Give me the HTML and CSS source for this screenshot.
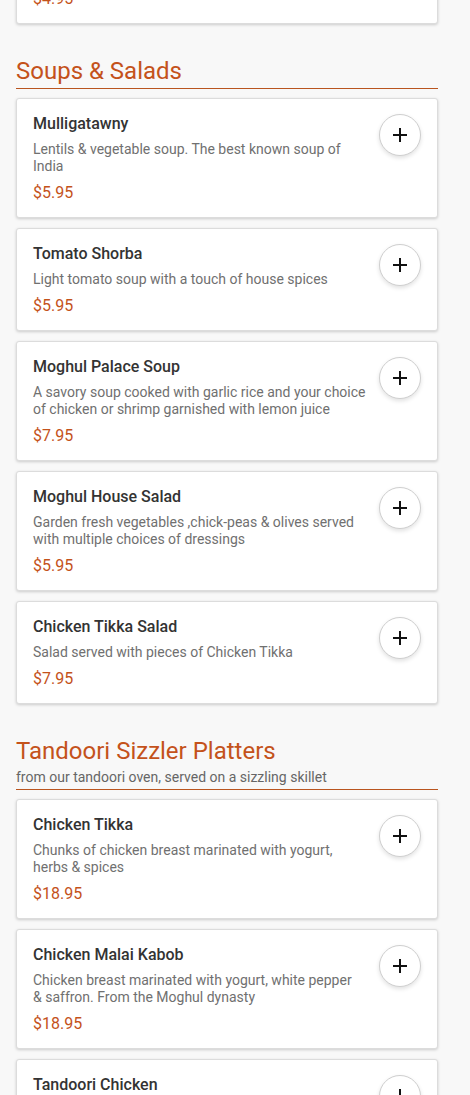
FILE: index.html
```html
<!DOCTYPE html>
<html>
<head>
	<meta charset="utf-8">
	<meta name="viewport" content="width=device-width, initial-scale=1">
	<title>Moghul Palace Menu</title>
	<link rel="stylesheet" href="styles.css">
</head>
<body>
<div class="menu">

<section class="category">
	<div class="item">
		<div class="item-info">
			<h4 class="item-name">Vegetable Pakora</h4>
			<p class="item-desc">Fresh vegetables fried in chick-pea batter</p>
			<span class="item-price">$4.95</span>
		</div>
		<button class="add-btn" aria-label="Add">
			<svg width="16" height="16" viewBox="0 0 16 16"><path d="M8 1v14M1 8h14" stroke="#111" stroke-width="2"/></svg>
		</button>
	</div>
</section>

<section class="category">
	<div class="category-head">
		<h2>Soups &amp; Salads</h2>
	</div>

	<div class="item">
		<div class="item-info">
			<h4 class="item-name">Mulligatawny</h4>
			<p class="item-desc">Lentils &amp; vegetable soup. The best known soup of India</p>
			<span class="item-price">$5.95</span>
		</div>
		<button class="add-btn" aria-label="Add">
			<svg width="16" height="16" viewBox="0 0 16 16"><path d="M8 1v14M1 8h14" stroke="#111" stroke-width="2"/></svg>
		</button>
	</div>

	<div class="item">
		<div class="item-info">
			<h4 class="item-name">Tomato Shorba</h4>
			<p class="item-desc">Light tomato soup with a touch of house spices</p>
			<span class="item-price">$5.95</span>
		</div>
		<button class="add-btn" aria-label="Add">
			<svg width="16" height="16" viewBox="0 0 16 16"><path d="M8 1v14M1 8h14" stroke="#111" stroke-width="2"/></svg>
		</button>
	</div>

	<div class="item">
		<div class="item-info">
			<h4 class="item-name">Moghul Palace Soup</h4>
			<p class="item-desc">A savory soup cooked with garlic rice and your choice of chicken or shrimp garnished with lemon juice</p>
			<span class="item-price">$7.95</span>
		</div>
		<button class="add-btn" aria-label="Add">
			<svg width="16" height="16" viewBox="0 0 16 16"><path d="M8 1v14M1 8h14" stroke="#111" stroke-width="2"/></svg>
		</button>
	</div>

	<div class="item">
		<div class="item-info">
			<h4 class="item-name">Moghul House Salad</h4>
			<p class="item-desc">Garden fresh vegetables ,chick-peas &amp; olives served with multiple choices of dressings</p>
			<span class="item-price">$5.95</span>
		</div>
		<button class="add-btn" aria-label="Add">
			<svg width="16" height="16" viewBox="0 0 16 16"><path d="M8 1v14M1 8h14" stroke="#111" stroke-width="2"/></svg>
		</button>
	</div>

	<div class="item">
		<div class="item-info">
			<h4 class="item-name">Chicken Tikka Salad</h4>
			<p class="item-desc">Salad served with pieces of Chicken Tikka</p>
			<span class="item-price">$7.95</span>
		</div>
		<button class="add-btn" aria-label="Add">
			<svg width="16" height="16" viewBox="0 0 16 16"><path d="M8 1v14M1 8h14" stroke="#111" stroke-width="2"/></svg>
		</button>
	</div>
</section>

<section class="category">
	<div class="category-head">
		<h2>Tandoori Sizzler Platters</h2>
		<p class="category-note">from our tandoori oven, served on a sizzling skillet</p>
	</div>

	<div class="item">
		<div class="item-info">
			<h4 class="item-name">Chicken Tikka</h4>
			<p class="item-desc">Chunks of chicken breast marinated with yogurt, herbs &amp; spices</p>
			<span class="item-price">$18.95</span>
		</div>
		<button class="add-btn" aria-label="Add">
			<svg width="16" height="16" viewBox="0 0 16 16"><path d="M8 1v14M1 8h14" stroke="#111" stroke-width="2"/></svg>
		</button>
	</div>

	<div class="item">
		<div class="item-info">
			<h4 class="item-name">Chicken Malai Kabob</h4>
			<p class="item-desc">Chicken breast marinated with yogurt, white pepper &amp;&nbsp;saffron. From the Moghul dynasty</p>
			<span class="item-price">$18.95</span>
		</div>
		<button class="add-btn" aria-label="Add">
			<svg width="16" height="16" viewBox="0 0 16 16"><path d="M8 1v14M1 8h14" stroke="#111" stroke-width="2"/></svg>
		</button>
	</div>

	<div class="item">
		<div class="item-info">
			<h4 class="item-name">Tandoori Chicken</h4>
			<p class="item-desc">Spring chicken marinated in yogurt &amp; spices, roasted in the tandoor</p>
			<span class="item-price">$16.95</span>
		</div>
		<button class="add-btn" aria-label="Add">
			<svg width="16" height="16" viewBox="0 0 16 16"><path d="M8 1v14M1 8h14" stroke="#111" stroke-width="2"/></svg>
		</button>
	</div>
</section>

</div>
</body>
</html>
```

FILE: styles.css
```css
html, *, *::before,
*::after{
	box-sizing: border-box;
}
body{
	margin: 0;
	background: #f8f8f8;
	font-family: Roboto, "Liberation Sans", sans-serif;
	overflow: hidden;
}
.menu{
	width: 422px;
	margin: -79px 0 0 16px;
}
.category{
	margin-bottom: 33px;
}
.category-head{
	border-bottom: 1px solid #b9551f;
	padding-bottom: 3px;
	margin-bottom: 9px;
}
.category-head h2{
	margin: 0;
	font-size: 24px;
	line-height: 28px;
	font-weight: 400;
	color: #c4521b;
}
.category-note{
	margin: 4px 0 0;
	font-size: 14px;
	line-height: 17px;
	color: #666;
}
.item{
	display: flex;
	align-items: flex-start;
	gap: 13px;
	background: #fff;
	border: 1px solid #dcdcdc;
	border-radius: 3px;
	box-shadow: 0 1px 3px rgba(0, 0, 0, 0.18);
	padding: 16px 16px 14px 16px;
	margin-bottom: 10px;
}
.item-info{
	flex: 1;
}
.item-name{
	margin: 0 0 8px;
	font-size: 16px;
	line-height: 18px;
	font-weight: 500;
	color: #333;
}
.item-desc{
	margin: 0 0 8px;
	font-size: 14px;
	line-height: 17px;
	color: #707070;
}
.item-price{
	display: block;
	font-size: 16px;
	line-height: 20px;
	color: #c4521b;
}
.add-btn{
	flex: none;
	width: 42px;
	height: 42px;
	margin-top: -1px;
	border-radius: 50%;
	border: 1px solid #cfcfcf;
	background: #fff;
	box-shadow: 0 2px 4px rgba(0, 0, 0, 0.12);
	display: flex;
	align-items: center;
	justify-content: center;
	padding: 0;
	cursor: pointer;
}
```
